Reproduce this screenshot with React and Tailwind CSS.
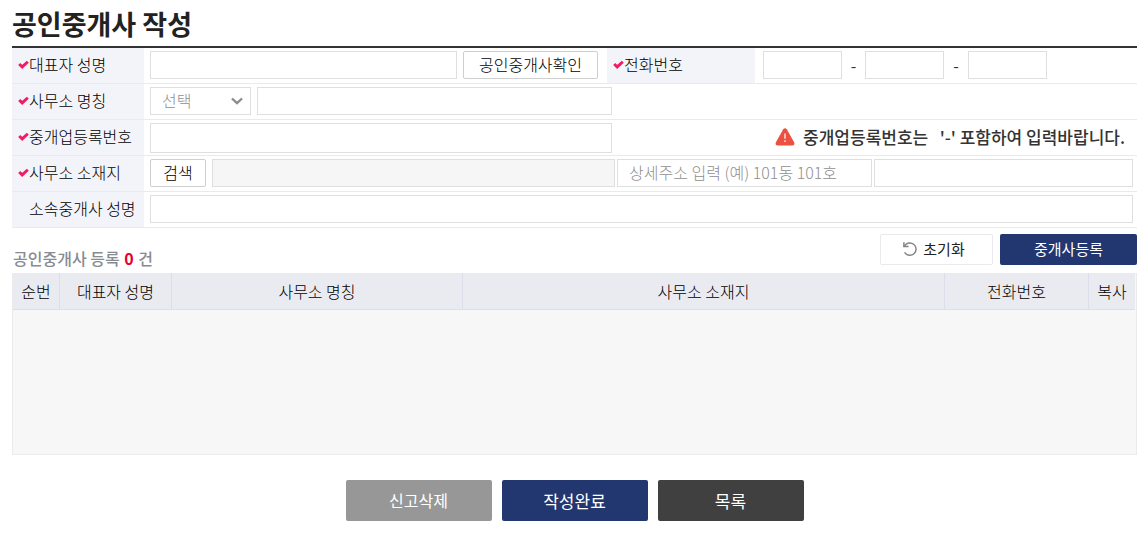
const FIELD = "h-7 border border-[#dfdfdf] bg-white px-[11px] pb-0.5 text-base text-[#333] outline-none placeholder:text-[#8f8f8f] placeholder:opacity-100";
const ROW = "flex min-h-9 border-b border-[#e9e9f1]";
const CELL = "flex min-w-0 flex-1 items-start pt-[3px] pl-1.5 pr-1";
const OUTLINE_BUTTON = "h-7 shrink-0 rounded-xs border border-[#cfcfcf] bg-white pb-0.5 text-base leading-6 text-black";

function Check() {
  return (
    <svg className="w-[11px] shrink-0" height="9" viewBox="0 0 11 9" fill="none" aria-hidden="true">
      <path d="M1.2 4 4.2 6.9 9.8 1.8" stroke="#ee1c60" strokeWidth="2.9" />
    </svg>
  );
}

function Label({ htmlFor, required, width = "w-[132px]", children }) {
  return (
    <label htmlFor={htmlFor} className={`flex shrink-0 items-center bg-[#f3f4f9] pb-[3px] pl-1.5 text-base leading-6 whitespace-nowrap text-black ${width}`}>
      {required ? <Check /> : <span className="w-[11px] shrink-0" />}
      {children}
    </label>
  );
}

function WarningIcon() {
  return (
    <svg width="20" height="18" viewBox="0 0 20 18" className="shrink-0" aria-hidden="true">
      <path d="M8.2 1.2Q10-.8 11.8 1.2L19.2 14.6Q20 17.5 17.6 17.5H2.4Q0 17.5.8 14.6Z" fill="#ec5040" />
      <path d="M10 5.5v5.3" stroke="#fff" strokeWidth="1.2" />
      <path d="M10 12.2v1.8" stroke="#fff" strokeWidth="1.2" />
    </svg>
  );
}

function ResetIcon() {
  return (
    <svg width="16" height="16" viewBox="0 0 16 16" fill="none" stroke="#858585" strokeWidth="1.5" aria-hidden="true">
      <path d="M1.2 5.5H6.6" />
      <path d="M1.9 1.2v4.6" />
      <path d="M2.4 5.2A6.2 6.2 0 1 1 2.6 11.4" />
    </svg>
  );
}

const COLUMNS = [
  ["순번", "w-[47px]"],
  ["대표자 성명", "w-[112px]"],
  ["사무소 명칭", "w-[291px]"],
  ["사무소 소재지", ""],
  ["전화번호", "w-36"],
  ["복사", "w-[46px]"],
];

export default function App() {
  return (
    <main className="bg-white pr-[9px] pl-3 font-['Noto_Sans_CJK_KR','Noto_Sans',sans-serif] font-light text-[#333]">
      <h1 className="border-b-2 border-[#333] pt-1.5 pb-1 text-[27px] leading-9 font-bold text-[#222]">공인중개사 작성</h1>

      <form onSubmit={(e) => e.preventDefault()}>
        <div className={ROW}>
          <Label htmlFor="name" required>대표자 성명</Label>
          <div className="flex min-w-0 flex-1 items-start gap-1.5 pt-[3px] pr-[9px] pl-1.5">
            <input id="name" type="text" className={`min-w-0 flex-1 ${FIELD}`} />
            <button type="button" className={`w-[135px] ${OUTLINE_BUTTON}`}>공인중개사확인</button>
          </div>
          <Label htmlFor="tel1" required width="w-[148px]">전화번호</Label>
          <div className="flex w-[382px] items-start pt-[3px] pl-2">
            <input id="tel1" type="tel" className={`w-[79px] ${FIELD}`} />
            <span className="w-[23px] text-center text-base leading-7 font-normal">-</span>
            <input id="tel2" type="tel" aria-label="전화번호 가운데 자리" className={`w-[79px] ${FIELD}`} />
            <span className="w-6 text-center text-base leading-7 font-normal">-</span>
            <input id="tel3" type="tel" aria-label="전화번호 끝자리" className={`w-[79px] ${FIELD}`} />
          </div>
        </div>

        <div className={ROW}>
          <Label htmlFor="office" required>사무소 명칭</Label>
          <div className={`gap-1.5 ${CELL}`}>
            <div className="grid w-[101px]">
              <select aria-label="사무소 명칭 구분" className="col-start-1 row-start-1 h-7 w-full appearance-none border border-[#dfdfdf] bg-white pb-0.5 pl-[11px] text-base leading-6 text-[#8f8f8f] outline-none">
                <option>선택</option>
              </select>
              <svg className="pointer-events-none col-start-1 row-start-1 mr-2 self-center justify-self-end" width="12" height="8" viewBox="0 0 12 8" fill="none" aria-hidden="true">
                <path d="M1 1.5 6 6.2 11 1.5" stroke="#8c8c8c" strokeWidth="2.4" />
              </svg>
            </div>
            <input id="office" type="text" className={`w-[355px] ${FIELD}`} />
          </div>
        </div>

        <div className={ROW}>
          <Label htmlFor="regno" required>중개업등록번호</Label>
          <div className="flex min-w-0 flex-1 items-start justify-between pt-[3px] pr-3 pl-1.5">
            <input id="regno" type="text" className="h-[30px] w-[462px] border border-[#dfdfdf] bg-white px-[11px] text-base outline-none" />
            <p className="flex items-center gap-2 text-[17px] leading-7 font-medium whitespace-pre text-[#333]">
              <WarningIcon />
              {"중개업등록번호는   '-' 포함하여 입력바랍니다."}
            </p>
          </div>
        </div>

        <div className={ROW}>
          <Label htmlFor="addr" required>사무소 소재지</Label>
          <div className={`gap-1.5 ${CELL}`}>
            <button type="button" className={`w-14 ${OUTLINE_BUTTON}`}>검색</button>
            <div className="flex min-w-0 flex-1 gap-0.5">
              <input id="addr" type="text" readOnly className="h-7 w-[403px] border border-[#dfdfdf] bg-[#f6f6f6] px-[11px] text-base outline-none" />
              <input type="text" aria-label="상세주소" placeholder="상세주소 입력 (예) 101동 101호" className={`w-[255px] ${FIELD}`} />
              <input type="text" aria-label="참고주소" className={`min-w-0 flex-1 ${FIELD}`} />
            </div>
          </div>
        </div>

        <div className={ROW}>
          <Label htmlFor="agent">소속중개사 성명</Label>
          <div className={CELL}>
            <input id="agent" type="text" className={`min-w-0 flex-1 ${FIELD}`} />
          </div>
        </div>
      </form>

      <div className="flex items-start justify-between pt-1.5">
        <p className="pt-3 pb-[3px] pl-px text-base leading-6 font-medium text-[#888b92]">
          공인중개사 등록 <strong className="mx-px font-bold text-[#e6002d]">0</strong> 건
        </p>
        <div className="flex gap-[7px] text-[15px] leading-6 font-normal">
          <button type="button" className="flex h-[31px] w-[113px] items-center justify-center gap-[5px] rounded-xs border border-[#e9e9ee] bg-white pr-1.5 pb-0.5 text-[#222]">
            <ResetIcon />
            초기화
          </button>
          <button type="button" className="h-[31px] w-[137px] rounded-xs bg-[#22366f] pb-0.5 text-white">중개사등록</button>
        </div>
      </div>

      <div className="border border-t-0 border-[#ebebeb] bg-[#f7f7f7] pr-px">
        <table className="w-full table-fixed border-separate border-spacing-0">
          <thead>
            <tr>
              {COLUMNS.map(([title, width]) => (
                <th key={title} scope="col" className={`h-[37px] border-r border-b border-[#dedeea] bg-[#eaebf1] p-0 text-base leading-6 font-light text-black last:border-r-0 ${width}`}>
                  {title}
                </th>
              ))}
            </tr>
          </thead>
          <tbody>
            <tr>
              <td colSpan={6} className="h-36 p-0" />
            </tr>
          </tbody>
        </table>
      </div>

      <div className="flex justify-center gap-2.5 pt-[25px] pb-5 text-[17px] leading-6 font-normal text-white">
        <button type="button" className="h-[41px] w-[146px] rounded-xs bg-[#979797] pb-0.5 text-base">신고삭제</button>
        <button type="button" className="h-[41px] w-[146px] rounded-xs bg-[#22366f]">작성완료</button>
        <button type="button" className="h-[41px] w-[146px] rounded-xs bg-[#404040]">목록</button>
      </div>
    </main>
  );
}
